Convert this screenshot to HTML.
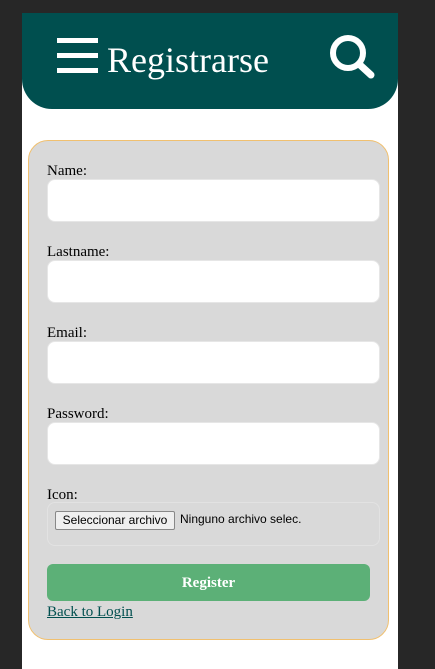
<!DOCTYPE html>
<html><head><style>
body{margin:0;background:#272727;width:435px;height:669px;overflow:hidden;font-family:"Liberation Serif",serif}
.col{position:absolute;left:22px;top:13px;width:376px;height:656px;background:#fff}
.hdr{position:absolute;left:0;top:0;width:376px;height:96px;background:#004f4f;border-radius:0 0 30px 30px}
.bar{position:absolute;left:35px;width:41px;height:5px;background:#fff}
.title{position:absolute;left:85px;top:26px;font-size:36px;color:#fff}
.card{position:absolute;left:6px;top:127px;width:359px;height:498px;background:#d9d9d9;border:1px solid #f0c070;border-radius:20px}
.lbl{position:absolute;left:18px;font-size:15px;color:#000}
.inp{position:absolute;left:18px;width:331px;height:41px;background:#fff;border:1px solid #e6e6e6;border-radius:8px}
.fbox{position:absolute;left:18px;top:361px;width:331px;height:42px;border:1px solid #e2e2e2;border-radius:8px}
.fbtn{position:absolute;left:7px;top:8px;width:118px;height:17px;border:1px solid #888;background:#efefef;font:12px "Liberation Sans",sans-serif;text-align:center;line-height:17px;border-radius:2px}
.ftxt{position:absolute;left:132px;top:9px;font:12px "Liberation Sans",sans-serif}
.btn{position:absolute;left:18px;top:423px;width:323px;height:37px;background:#5cb077;border-radius:6px;color:#fff;font-weight:bold;font-size:15px;text-align:center;line-height:39px}
.lnk{position:absolute;left:18px;top:463px;font-size:15px;color:#004f4f;text-decoration:underline}
</style></head><body>
<div class="col">
<div class="hdr">
<div class="bar" style="top:25px"></div><div class="bar" style="top:40px"></div><div class="bar" style="top:55px"></div>
<div class="title">Registrarse</div>
<svg style="position:absolute;left:305px;top:19px" width="52" height="52" viewBox="0 0 52 52"><circle cx="21" cy="21" r="15" fill="none" stroke="#fff" stroke-width="6"/><line x1="32" y1="32" x2="44" y2="43" stroke="#fff" stroke-width="7" stroke-linecap="round"/></svg>
</div>
<div class="card">
<div class="lbl" style="top:22px">Name:</div><div class="inp" style="top:38px"></div>
<div class="lbl" style="top:103px">Lastname:</div><div class="inp" style="top:119px"></div>
<div class="lbl" style="top:184px">Email:</div><div class="inp" style="top:200px"></div>
<div class="lbl" style="top:265px">Password:</div><div class="inp" style="top:281px"></div>
<div class="lbl" style="top:346px">Icon:</div>
<div class="fbox"><div class="fbtn">Seleccionar archivo</div><div class="ftxt">Ninguno archivo selec.</div></div>
<div class="btn">Register</div>
<div class="lnk">Back to Login</div>
</div>
</div>
</body></html>
